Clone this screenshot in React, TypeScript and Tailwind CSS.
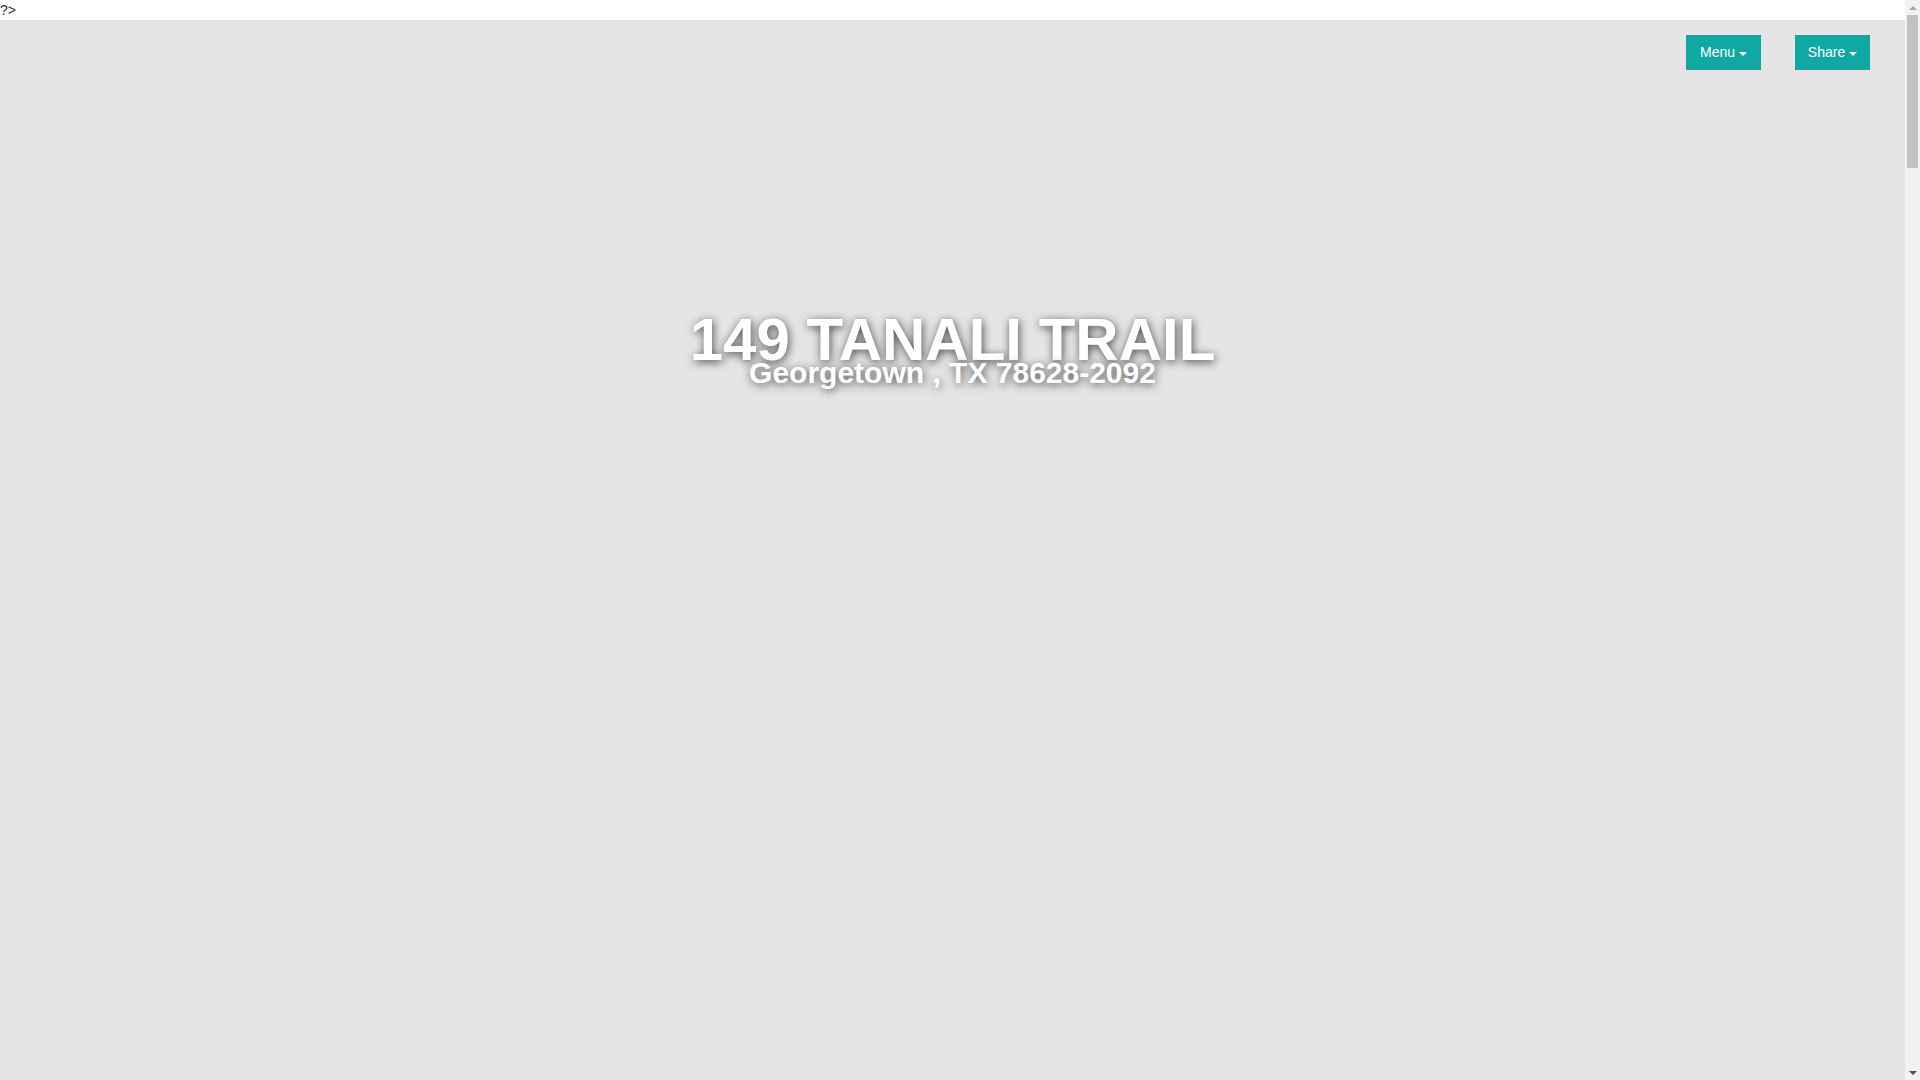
export default function App() {
  return (
    <div className="flex h-screen overflow-hidden bg-white font-['Liberation_Sans',Arial,sans-serif] text-[#333]">
      <div className="flex-1 flex flex-col">
        {/* stray php tag left in the markup */}
        <div className="text-[14px] leading-[20px] h-[20px] shrink-0">?&gt;</div>

        <div className="flex-1 bg-[#e5e5e5]">
          {/* Top buttons */}
          <div className="flex justify-end gap-[34px] pt-[15px] pr-[35px]">
            <button className="w-[75px] h-[35px] bg-[#0fa9a3] text-white text-[14px] flex items-center justify-center gap-[4px]">
              Menu
              <span className="w-0 h-0 border-l-[4px] border-r-[4px] border-t-[4px] border-l-transparent border-r-transparent border-t-white mt-[2px]" />
            </button>
            <button className="w-[75px] h-[35px] bg-[#0fa9a3] text-white text-[14px] flex items-center justify-center gap-[4px]">
              Share
              <span className="w-0 h-0 border-l-[4px] border-r-[4px] border-t-[4px] border-l-transparent border-r-transparent border-t-white mt-[2px]" />
            </button>
          </div>

          {/* Address header */}
          <div className="pt-[251px] text-center text-white font-bold [text-shadow:1px_2px_10px_rgba(0,0,0,0.7)]">
            <h1 className="text-[60px] leading-[38px]">149 TANALI TRAIL</h1>
            <h2 className="text-[30px] leading-[28px]">Georgetown , TX 78628-2092</h2>
          </div>
        </div>
      </div>

      {/* page scrollbar */}
      <div className="w-[15px] shrink-0 flex flex-col bg-[#f1f1f1]">
        <div className="h-[15px] flex items-center justify-center">
          <span className="w-0 h-0 border-l-[4px] border-r-[4px] border-b-[4px] border-l-transparent border-r-transparent border-b-[#a3a3a3]" />
        </div>
        <div className="flex-1 px-[2px]">
          <div className="h-[153px] bg-[#c1c1c1]" />
        </div>
        <div className="h-[15px] flex items-center justify-center">
          <span className="w-0 h-0 border-l-[4px] border-r-[4px] border-t-[4px] border-l-transparent border-r-transparent border-t-[#505050]" />
        </div>
      </div>
    </div>
  );
}
